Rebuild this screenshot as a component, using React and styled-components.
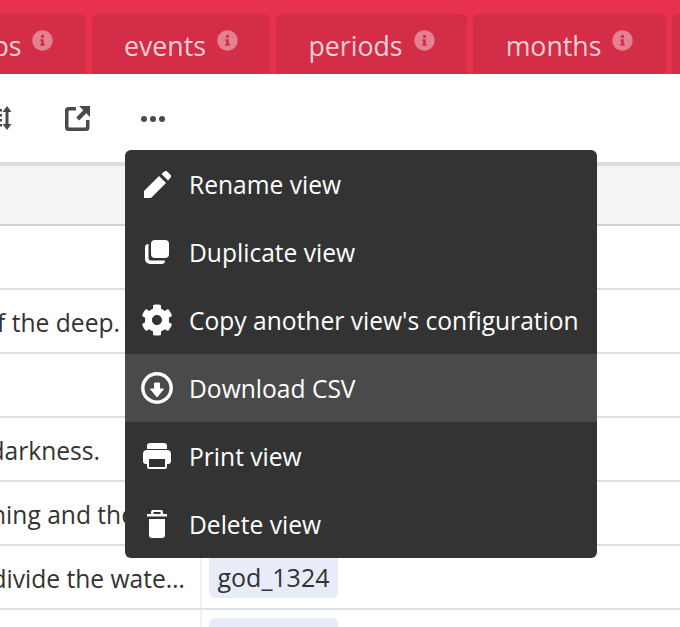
import styled, { createGlobalStyle } from "styled-components"
import { FaInfoCircle, FaCog } from "react-icons/fa"

const GlobalStyle = createGlobalStyle`
    html, body {
        margin: 0;
        padding: 0;
        background-color: #fff;
        overflow: hidden;
    }
    body {
        font-family: "Open Sans", "Noto Sans", sans-serif;
    }
`

const tabs = [
    { label: "groups", width: 184 },
    { label: "events", width: 178 },
    { label: "periods", width: 191 },
    { label: "months", width: 193 },
    { label: "", width: 100 },
]

const rows = [
    { text: "" },
    { text: "and darkness was over the surface of the deep.", end: 80 },
    { text: "" },
    { text: "and he separated the light from the darkness.", end: 100 },
    { text: "there was evening and there was morning and the", end: 65 },
    { text: "let there be a vault between the waters to divide the wate…", end: 15, chip: "god_1324" },
    { text: "", chip: " " },
]

const menuItems = [
    { label: "Rename view", icon: <PenIcon /> },
    { label: "Duplicate view", icon: <DuplicateIcon /> },
    { label: "Copy another view's configuration", icon: <FaCog size={32} /> },
    { label: "Download CSV", icon: <DownloadIcon />, active: true },
    { label: "Print view", icon: <PrintIcon /> },
    { label: "Delete view", icon: <TrashIcon /> },
]

function PenIcon() {
    return (
        <svg width="27" height="27" viewBox="0 0 27 27" fill="#fff">
            <path d="M0 27v-7L15 5l7 7L7 27z" />
            <path d="M17.500 3L20 .8a2.500 2.500 0 0 1 3.500 0l2.700 2.700a2.500 2.500 0 0 1 0 3.500L24 9.500z" />
        </svg>
    )
}

function DuplicateIcon() {
    return (
        <svg width="24" height="24" viewBox="0 0 24 24" fill="#fff">
            <rect x="6" y="0" width="18" height="18" rx="4" />
            <path d="M0 7.500a3.500 3.500 0 0 1 3.500-3.500V18a2.500 2.500 0 0 0 2.500 2.500h14a3.500 3.500 0 0 1-3.500 3.500H5a5 5 0 0 1-5-5z" />
        </svg>
    )
}

function DownloadIcon() {
    return (
        <svg width="32" height="32" viewBox="0 0 32 32">
            <circle cx="16" cy="16" r="14.200" fill="none" stroke="#fff" strokeWidth="3.400" />
            <path d="M13.500 11h5v6h4L16 25l-6.500-8h4z" fill="#fff" stroke="#fff" strokeWidth="1" strokeLinejoin="round" />
        </svg>
    )
}

function PrintIcon() {
    return (
        <svg width="28" height="26" viewBox="0 0 28 26" fill="#fff">
            <path d="M7 0h14a3 3 0 0 1 3 3v3H4V3a3 3 0 0 1 3-3z" />
            <path d="M4 7h20a4 4 0 0 1 4 4v7a3 3 0 0 1-3 3H3a3 3 0 0 1-3-3v-7a4 4 0 0 1 4-4z" />
            <rect x="4" y="14" width="20" height="12" rx="2" />
            <rect x="6" y="16" width="16" height="8" fill="#333" />
        </svg>
    )
}

function TrashIcon() {
    return (
        <svg width="20" height="28" viewBox="0 0 20 28" fill="#fff">
            <path d="M6 0h8a2 2 0 0 1 2 2v2h4v2.500H0V4h4V2a2 2 0 0 1 2-2zm.5 2v2h7V2z" />
            <path d="M2 9h16v16a3 3 0 0 1-3 3H5a3 3 0 0 1-3-3z" />
        </svg>
    )
}

function RowHeightIcon() {
    return (
        <svg width="24" height="24" viewBox="0 0 24 24" fill="#4a4a4a">
            <rect x="0" y="3" width="14" height="2.500" />
            <rect x="0" y="8" width="14" height="2.500" />
            <rect x="0" y="13" width="14" height="2.500" />
            <rect x="0" y="18" width="14" height="2.500" />
            <path d="M19 0l4.500 6h-3v12h3L19 24l-4.500-6h3V6h-3z" />
        </svg>
    )
}

function ExportIcon() {
    return (
        <svg width="25" height="25" viewBox="0 0 25 25" fill="#4a4a4a">
            <path d="M3.500 1H11v3.500H4.500a1 1 0 0 0-1 1V20.500a1 1 0 0 0 1 1H20a1 1 0 0 0 1-1V14h3.500v7.500A3.500 3.500 0 0 1 21 25H3.500A3.500 3.500 0 0 1 0 21.500v-17A3.500 3.500 0 0 1 3.500 1z" />
            <path d="M14 0h11v11l-3.800-3.800-7 7.300-3-3 7.100-7.200z" />
        </svg>
    )
}

function DotsIcon() {
    return (
        <svg width="24" height="6" viewBox="0 0 24 6" fill="#4a4a4a">
            <circle cx="3" cy="3" r="3" />
            <circle cx="12" cy="3" r="3" />
            <circle cx="21" cy="3" r="3" />
        </svg>
    )
}

export default function App() {
    return (
        <Page>
            <GlobalStyle />
            <TabBar>
                {tabs.map((tab, i) => (
                    <Tab key={i} $width={tab.width}>
                        {tab.label}
                        {tab.label && <InfoIcon><FaInfoCircle size={21} /></InfoIcon>}
                    </Tab>
                ))}
            </TabBar>

            <Toolbar>
                <ToolButton $after={53}><RowHeightIcon /></ToolButton>
                <ToolButton $after={51}><ExportIcon /></ToolButton>
                <ToolButton $down={2}><DotsIcon /></ToolButton>
            </Toolbar>

            <TableHeader />
            {rows.map((row, i) => (
                <Row key={i}>
                    <TextCell $end={row.end}>
                        <CellText>{row.text}</CellText>
                    </TextCell>
                    <TagCell>
                        {row.chip && <Chip>{row.chip}</Chip>}
                    </TagCell>
                </Row>
            ))}

            <Menu>
                {menuItems.map((item) => (
                    <MenuItem key={item.label} $active={item.active}>
                        <MenuIcon>{item.icon}</MenuIcon>
                        {item.label}
                    </MenuItem>
                ))}
            </Menu>
        </Page>
    )
}

const Page = styled.div`
    position: relative;
    width: 680px;
    height: 627px;
    overflow: hidden;
    background-color: #fff;
`

const TabBar = styled.div`
    height: 60px;
    padding-top: 14px;
    background-color: #e8304f;
    display: flex;
    gap: 6px;

    & > :first-child {
        margin-left: -98px;
    }
`

const Tab = styled.div`
    flex: 0 0 ${(props) => props.$width}px;
    box-sizing: border-box;
    display: flex;
    align-items: center;
    justify-content: center;
    gap: 11px;
    padding-top: 3px;
    background-color: #d32d47;
    border-radius: 6px 6px 0 0;
    color: rgba(255, 255, 255, 0.78);
    font-size: 26.700px;
`

const InfoIcon = styled.span`
    display: flex;
    margin-top: -10px;
    color: rgba(255, 255, 255, 0.4);
`

const Toolbar = styled.div`
    height: 88px;
    display: flex;
    align-items: center;
    margin-left: -12px;
`

const ToolButton = styled.div`
    display: flex;
    align-items: center;
    justify-content: center;
    margin-right: ${(props) => props.$after || 0}px;
    margin-top: ${(props) => props.$down || 0}px;
`

const TableHeader = styled.div`
    height: 58px;
    background-color: #f4f4f4;
    border-top: 4px solid #dcdcdc;
    border-bottom: 2px solid #d2d2d2;
`

const Row = styled.div`
    height: 62px;
    display: flex;
    border-bottom: 2px solid #dde0e4;
`

const TextCell = styled.div`
    flex: 0 0 202px;
    box-sizing: border-box;
    display: flex;
    align-items: center;
    justify-content: flex-end;
    padding-right: ${(props) => props.$end || 0}px;
    padding-top: 3px;
    overflow: hidden;
    white-space: nowrap;
    border-right: 2px solid #eef0f2;
    color: #333;
    font-size: 24.600px;
`

const CellText = styled.span`
    flex-shrink: 0;
`

const TagCell = styled.div`
    flex: 1;
    padding: 8px 7px;
`

const Chip = styled.span`
    display: inline-block;
    box-sizing: border-box;
    width: 129px;
    height: 44px;
    line-height: 47px;
    text-align: center;
    border-radius: 6px;
    background-color: #e8ecf8;
    color: #333;
    font-size: 25px;
`

const Menu = styled.div`
    position: absolute;
    left: 125px;
    top: 150px;
    width: 472px;
    border-radius: 6px;
    overflow: hidden;
    background-color: #333;
`

const MenuItem = styled.div`
    height: 68px;
    display: flex;
    align-items: center;
    background-color: ${(props) => (props.$active ? "#4a4a4a" : "transparent")};
    color: #fff;
    font-size: 24.600px;
    white-space: nowrap;
`

const MenuIcon = styled.span`
    flex: 0 0 64px;
    display: flex;
    justify-content: center;
    color: #fff;
`
